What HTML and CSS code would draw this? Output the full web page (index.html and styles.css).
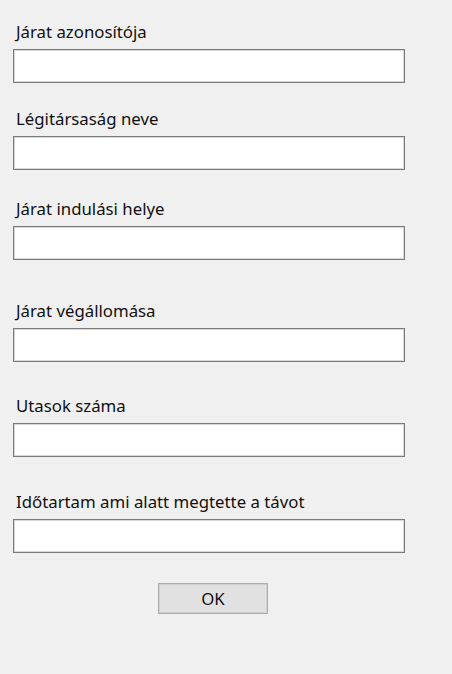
FILE: index.html
```html
<!DOCTYPE html>
<html lang="hu">
<head>
<meta charset="utf-8">
<link rel="stylesheet" href="styles.css">
</head>
<body>
<form class="form">
  <div class="field">
    <label class="label">Járat azonosítója</label>
    <input class="input" type="text">
  </div>
  <div class="field g26">
    <label class="label">Légitársaság neve</label>
    <input class="input" type="text">
  </div>
  <div class="field g29">
    <label class="label">Járat indulási helye</label>
    <input class="input" type="text">
  </div>
  <div class="field g41">
    <label class="label">Járat végállomása</label>
    <input class="input" type="text">
  </div>
  <div class="field g34">
    <label class="label">Utasok száma</label>
    <input class="input" type="text">
  </div>
  <div class="field g35">
    <label class="label">Időtartam ami alatt megtette a távot</label>
    <input class="input" type="text">
  </div>
  <div class="actions">
    <button class="btn" type="button">OK</button>
  </div>
</form>
</body>
</html>
```
FILE: styles.css
```css
html, body {
  margin: 0;
  padding: 0;
  background: #f0f0f0;
  height: 100%;
}
body {
  font-family: "Noto Sans", "Open Sans", sans-serif;
  font-size: 16.8px;
  color: #111;
}
.form {
  display: flex;
  flex-direction: column;
  padding: 22px 0 0 13px;
}
.field {
  display: flex;
  flex-direction: column;
  gap: 7px;
}
.g26 { margin-top: 26px; }
.g29 { margin-top: 29px; }
.g41 { margin-top: 41px; }
.g34 { margin-top: 34px; }
.g35 { margin-top: 35px; }
.label {
  line-height: 20px;
  height: 20px;
  padding-left: 3px;
}
.input {
  box-sizing: border-box;
  width: 392px;
  height: 34px;
  margin: 0;
  border: 1px solid #7a7a7a;
  box-shadow: inset 0 0 0 1px #d8d8d8;
  background: #fff;
  padding: 0 4px;
  font: inherit;
  outline: none;
}
.actions {
  margin-top: 30px;
  padding-left: 145px;
}
.btn {
  box-sizing: border-box;
  width: 110px;
  height: 31px;
  margin: 0;
  background: #e1e1e1;
  border: 1px solid #adadad;
  box-shadow: inset 0 0 0 1px #d0d0d0;
  font: inherit;
  color: #111;
  padding: 0;
}
```
